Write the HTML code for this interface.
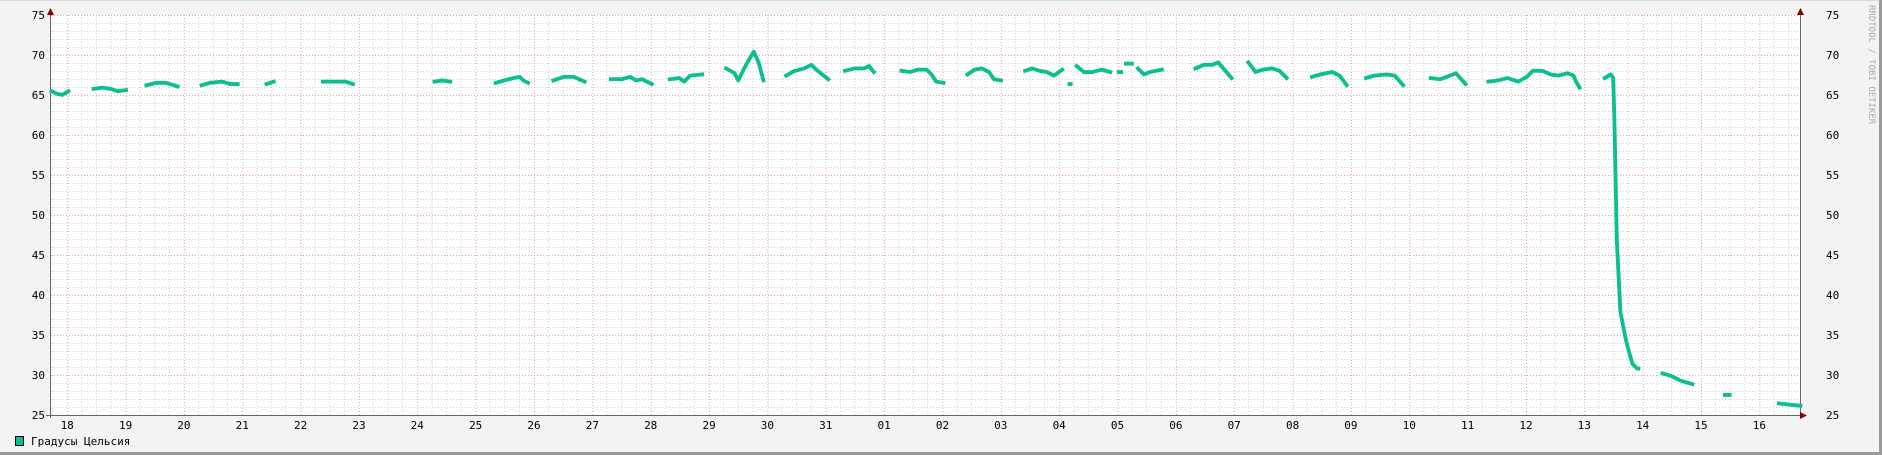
<!DOCTYPE html>
<html><head><meta charset="utf-8"><style>
html,body{margin:0;padding:0;background:#f3f3f3;}
svg{display:block}
text{font-family:"DejaVu Sans Mono","Liberation Mono",monospace;font-size:11px;fill:#000}
</style></head><body>
<svg width="1882" height="455" xmlns="http://www.w3.org/2000/svg">
<defs>
<pattern id="vx" patternUnits="userSpaceOnUse" x="67.2" y="0" width="58.35" height="455">
<line x1="14.59" y1="0" x2="14.59" y2="455" stroke="#cfcfcf" stroke-dasharray="1,2"/>
<line x1="29.18" y1="0" x2="29.18" y2="455" stroke="#cfcfcf" stroke-dasharray="1,2"/>
<line x1="43.76" y1="0" x2="43.76" y2="455" stroke="#cfcfcf" stroke-dasharray="1,2"/>
<line x1="0.5" y1="0" x2="0.5" y2="455" stroke="#e6a0a0" stroke-dasharray="1,2"/>
</pattern>
<pattern id="hy" patternUnits="userSpaceOnUse" x="0" y="15" width="1882" height="40">
<line x1="0" y1="8.5" x2="1882" y2="8.5" stroke="#cfcfcf" stroke-dasharray="1,2"/>
<line x1="0" y1="16.5" x2="1882" y2="16.5" stroke="#cfcfcf" stroke-dasharray="1,2"/>
<line x1="0" y1="24.5" x2="1882" y2="24.5" stroke="#cfcfcf" stroke-dasharray="1,2"/>
<line x1="0" y1="32.5" x2="1882" y2="32.5" stroke="#cfcfcf" stroke-dasharray="1,2"/>
<line x1="0" y1="0.5" x2="1882" y2="0.5" stroke="#e6a0a0" stroke-dasharray="1,2"/>
</pattern>
</defs>
<rect x="0" y="0" width="1882" height="455" fill="#f3f3f3"/>
<rect x="0" y="0" width="1882" height="1" fill="#d8d8d8"/>
<rect x="1879" y="0" width="3" height="455" fill="#9a9a9a"/>
<rect x="0" y="452" width="1882" height="3" fill="#9a9a9a"/>
<rect x="50" y="15" width="1750" height="400" fill="#fff"/>
<rect x="50" y="15" width="1750" height="400" fill="url(#hy)"/>
<rect x="50" y="15" width="1750" height="400" fill="url(#vx)"/>
<line x1="50.5" y1="10" x2="50.5" y2="418" stroke="#666"/>
<line x1="1800.5" y1="10" x2="1800.5" y2="418" stroke="#666"/>
<line x1="46" y1="415.5" x2="1804" y2="415.5" stroke="#666"/>
<polygon points="47,15 54,15 50.5,8" fill="#8b0000"/>
<polygon points="1797,15 1804,15 1800.5,8" fill="#8b0000"/>
<polygon points="1800,412 1800,419 1807,415.5" fill="#8b0000"/>
<g text-anchor="end">
<text x="45" y="19">75</text><text x="45" y="59">70</text><text x="45" y="99">65</text><text x="45" y="139">60</text><text x="45" y="179">55</text><text x="45" y="219">50</text><text x="45" y="259">45</text><text x="45" y="299">40</text><text x="45" y="339">35</text><text x="45" y="379">30</text><text x="45" y="419">25</text>
</g>
<g>
<text x="1826" y="19">75</text><text x="1826" y="59">70</text><text x="1826" y="99">65</text><text x="1826" y="139">60</text><text x="1826" y="179">55</text><text x="1826" y="219">50</text><text x="1826" y="259">45</text><text x="1826" y="299">40</text><text x="1826" y="339">35</text><text x="1826" y="379">30</text><text x="1826" y="419">25</text>
</g>
<g text-anchor="middle">
<text x="67.2" y="429">18</text><text x="125.6" y="429">19</text><text x="183.9" y="429">20</text><text x="242.3" y="429">21</text><text x="300.6" y="429">22</text><text x="359" y="429">23</text><text x="417.3" y="429">24</text><text x="475.7" y="429">25</text><text x="534" y="429">26</text><text x="592.4" y="429">27</text><text x="650.7" y="429">28</text><text x="709.1" y="429">29</text><text x="767.4" y="429">30</text><text x="825.8" y="429">31</text><text x="884.1" y="429">01</text><text x="942.5" y="429">02</text><text x="1000.8" y="429">03</text><text x="1059.2" y="429">04</text><text x="1117.5" y="429">05</text><text x="1175.9" y="429">06</text><text x="1234.2" y="429">07</text><text x="1292.6" y="429">08</text><text x="1350.9" y="429">09</text><text x="1409.3" y="429">10</text><text x="1467.6" y="429">11</text><text x="1526" y="429">12</text><text x="1584.3" y="429">13</text><text x="1642.7" y="429">14</text><text x="1701" y="429">15</text><text x="1759.4" y="429">16</text>
</g>
<text transform="translate(1869,5) rotate(90)" style="font-size:9px;fill:#aaa">RRDTOOL / TOBI OETIKER</text>
<rect x="15.5" y="436.5" width="8" height="9" fill="#0bbf8f" stroke="#000"/>
<text x="31" y="445">Градусы Цельсия</text>
<g transform="scale(1.2003,1.2005)" fill="none" stroke="#0bbf8f" stroke-width="3.2" stroke-linejoin="round" stroke-linecap="square">
<polyline points="43,76 47,78 52,79 57,76"/>
<polyline points="78,74 85,73 92,74 98,76 105,75"/>
<polyline points="122,71 130,69 138,69 148,72"/>
<polyline points="168,71 175,69 185,68 192,70 198,70"/>
<polyline points="222,70 228,68"/>
<polyline points="269,68 280,68 288,68 294,70"/>
<polyline points="362,68 368,67 375,68"/>
<polyline points="413,69 420,67 428,65 433,64 436,67 440,69"/>
<polyline points="461,67 470,64 478,64 487,68"/>
<polyline points="509,66 518,66 525,64 530,67 535,66 543,70"/>
<polyline points="558,66 566,65 570,68 575,63 585,62"/>
<polyline points="605,57 612,61 615,67 620,57 625,48 628,43 632,52 636,67"/>
<polyline points="655,63 662,59 670,57 676,54 680,58 690,66"/>
<polyline points="704,59 712,57 720,57 724,55 728,60"/>
<polyline points="751,59 758,60 765,58 772,58 776,62 780,68 786,69"/>
<polyline points="806,62 812,58 818,57 824,60 828,66 834,67"/>
<polyline points="854,59 860,57 866,59 872,60 878,63 885,58"/>
<polyline points="891,70 892,70"/>
<polyline points="897,55 903,60 910,60 918,58 925,60"/>
<polyline points="932,60 934,60"/>
<polyline points="938,53 943,53"/>
<polyline points="948,57 953,62 958,60 968,58"/>
<polyline points="996,57 1003,54 1010,54 1015,52 1020,58 1026,65"/>
<polyline points="1040,52 1046,60 1052,58 1060,57 1066,59 1072,65"/>
<polyline points="1093,64 1100,62 1110,60 1116,63 1122,71"/>
<polyline points="1138,65 1145,63 1155,62 1162,63 1169,71"/>
<polyline points="1192,65 1200,66 1208,63 1213,61 1221,70"/>
<polyline points="1240,68 1248,67 1256,65 1265,68 1272,64 1277,59 1285,59 1292,62 1298,63 1306,61 1311,63 1313,68 1316,73"/>
<polyline points="1337,65 1342,62 1344,65 1345,100 1347,200 1350,260 1355,285 1360,303 1364,307 1365,307"/>
<polyline points="1385,311 1392,313 1400,317 1410,320"/>
<polyline points="1437,329 1441,329"/>
<polyline points="1482,336 1490,337 1500,338"/>
</g>
</svg>
</body></html>
